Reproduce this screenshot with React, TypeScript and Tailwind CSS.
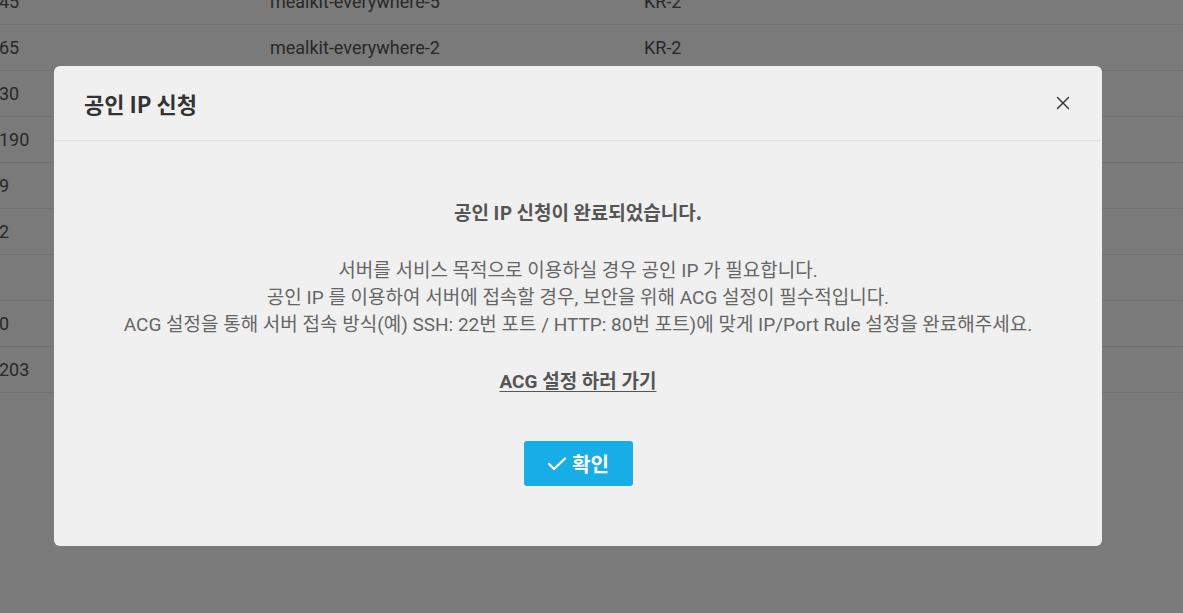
import { X } from "lucide-react"

const rows = [
  ["45", "mealkit-everywhere-5", "KR-2"],
  ["65", "mealkit-everywhere-2", "KR-2"],
  ["30", "", ""],
  ["190", "", ""],
  ["9", "", ""],
  ["2", "", ""],
  ["", "", ""],
  ["0", "", ""],
  ["203", "", ""],
]

export default function App() {
  return (
    <div className="relative h-[613px] w-full overflow-hidden bg-white font-['Roboto','Noto_Sans_CJK_KR',sans-serif]">
      {/* table behind */}
      <div className="-mt-[21px]">
        {rows.map(([a, b, c], i) => (
          <div key={i} className="grid h-[46px] grid-cols-[270px_374px_1fr] items-center border-b border-[#ebebeb] text-[18px] text-[#555]">
            <div className="-ml-[1px]">{a}</div>
            <div>{b}</div>
            <div>{c}</div>
          </div>
        ))}
      </div>

      {/* overlay */}
      <div className="absolute inset-0 bg-black/[0.52]">
        <div className="ml-[54px] mt-[66px] w-[1048px] h-[480px] rounded-[6px] bg-[#f0f0f0] flex flex-col">
          <div className="flex h-[75px] items-center justify-between border-b border-[#e0e0e0] pl-[30px] pr-[28px]">
            <h2 className="text-[22px] font-bold text-[#333] font-['Noto_Sans_CJK_KR',sans-serif]">공인 IP 신청</h2>
            <X size={22} strokeWidth={1.5} className="text-[#333]" />
          </div>
          <div className="flex flex-col items-center pt-[57px] text-center">
            <p className="text-[19px] font-bold leading-[27px] text-[#555] font-['Noto_Sans_CJK_KR',sans-serif]">공인 IP 신청이 완료되었습니다.</p>
            <div className="mt-[32px] text-[19px] leading-[27px] text-[#666]">
              <p>서버를 서비스 목적으로 이용하실 경우 공인 IP 가 필요합니다.</p>
              <p>공인 IP 를 이용하여 서버에 접속할 경우, 보안을 위해 ACG 설정이 필수적입니다.</p>
              <p>ACG 설정을 통해 서버 접속 방식(예) SSH: 22번 포트 / HTTP: 80번 포트)에 맞게 IP/Port Rule 설정을 완료해주세요.</p>
            </div>
            <a className="mt-[30px] text-[19px] font-bold leading-[27px] text-[#555] underline underline-offset-[3px]">ACG 설정 하러 가기</a>
            <button className="mt-[46px] flex h-[45px] w-[109px] items-center justify-center gap-[5px] rounded-[3px] bg-[#19ade8] text-[20px] font-bold text-white font-['Noto_Sans_CJK_KR',sans-serif]">
              <svg width="20" height="15" viewBox="0 0 20 15" fill="none">
                <path d="M2 8l5 5L18 2.5" stroke="white" strokeWidth="2.2" strokeLinecap="round" strokeLinejoin="round" />
              </svg>
              확인
            </button>
          </div>
        </div>
      </div>
    </div>
  )
}
